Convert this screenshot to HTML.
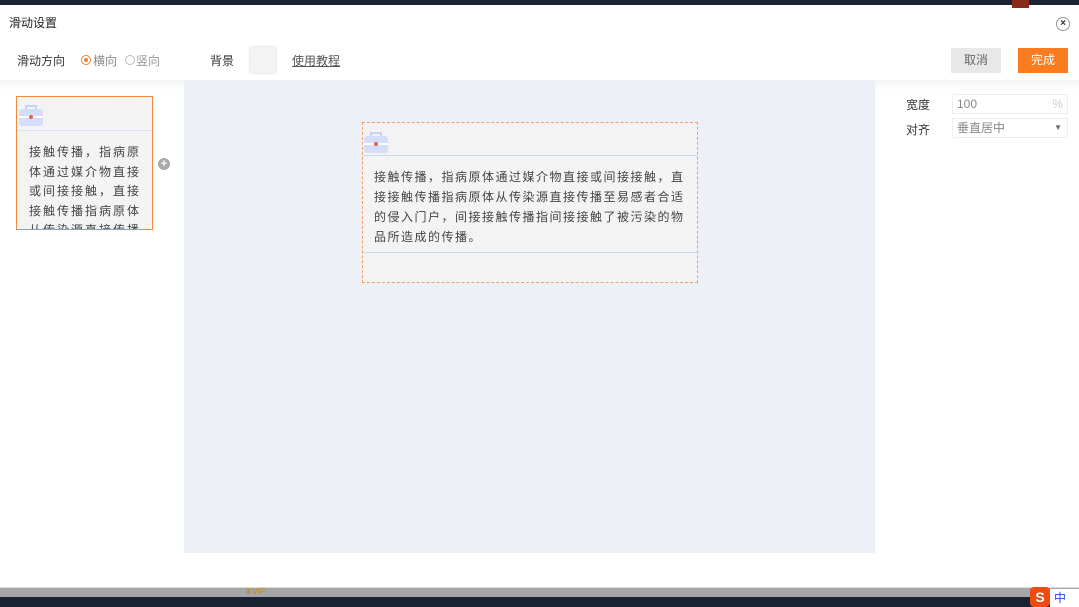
<!DOCTYPE html>
<html><head><meta charset="utf-8"><style>
*{margin:0;padding:0;box-sizing:border-box}
body{width:1079px;height:607px;overflow:hidden;background:#1a2233;font-family:"Liberation Sans","Noto Sans CJK SC",sans-serif;position:relative}
.a{position:absolute}
.dlg{left:0;top:5px;width:1079px;height:582px;background:#fff}
.hatch{background-color:#f6f6f6;background-image:repeating-linear-gradient(45deg,#eee 0 1px,transparent 1px 3px)}
.txt{color:#444;font-size:12px;letter-spacing:2px}
</style></head><body>
<div class="a dlg"></div>
<div class="a" style="left:1012px;top:0;width:17px;height:8px;background:#8a2a1a"></div>
<div class="a" style="left:9px;top:14px;font-size:12px;color:#222">滑动设置</div>
<div class="a" style="left:1056px;top:17px;width:14px;height:14px;border:1px solid #999;border-radius:50%;font-size:10px;line-height:12px;text-align:center;color:#333;font-weight:bold">×</div>
<div class="a" style="left:17px;top:52px;font-size:12px;color:#333">滑动方向</div>
<div class="a" style="left:81px;top:55px;width:10px;height:10px;border:1px solid #f08030;border-radius:50%"><div style="margin:2px;width:4px;height:4px;background:#f08030;border-radius:50%"></div></div>
<div class="a" style="left:93px;top:52px;font-size:12px;color:#888">横向</div>
<div class="a" style="left:125px;top:55px;width:10px;height:10px;border:1px solid #bbb;border-radius:50%"></div>
<div class="a" style="left:136px;top:52px;font-size:12px;color:#999">竖向</div>
<div class="a" style="left:210px;top:52px;font-size:12px;color:#333">背景</div>
<div class="a hatch" style="left:250px;top:47px;width:26px;height:26px;box-shadow:0 0 2px #ccc"></div>
<div class="a" style="left:292px;top:52px;font-size:12px;color:#555;text-decoration:underline">使用教程</div>
<div class="a" style="left:951px;top:48px;width:50px;height:25px;background:#e8e8e8;color:#666;font-size:12px;text-align:center;line-height:25px">取消</div>
<div class="a" style="left:1018px;top:48px;width:50px;height:25px;background:#fb7c20;color:#fff;font-size:12px;text-align:center;line-height:25px">完成</div>
<div class="a" style="left:0;top:80px;width:184px;height:10px;background:linear-gradient(#f3f3f3,#fff)"></div>
<div class="a" style="left:875px;top:80px;width:204px;height:10px;background:linear-gradient(#f3f3f3,#fff)"></div>
<div class="a" style="left:184px;top:80px;width:691px;height:473px;background:#edf0f6"></div>
<!-- left card -->
<div class="a hatch" style="left:16px;top:96px;width:137px;height:134px;border:1px solid #f08a40;overflow:hidden">
<div style="height:34px;border-bottom:1px solid #d8e2f8;position:relative"><svg class="a" style="left:1px;top:6px" width="26" height="24" viewBox="0 0 26 24"><path d="M8 6V3h10v3" fill="none" stroke="#c5d3f6" stroke-width="2"/><rect x="1" y="6" width="24" height="17" rx="3" fill="#d4def8"/><rect x="1" y="13" width="24" height="2" fill="#fff"/><circle cx="13" cy="14" r="2" fill="#f06040"/></svg></div>
<div class="txt" style="padding:12px 0 0 12px;line-height:19.5px;width:135px">接触传播，指病原体通过媒介物直接或间接接触，直接接触传播指病原体从传染源直接传播</div></div>
<div class="a" style="left:158px;top:158px;width:12px;height:12px;border-radius:50%;background:#aaa;color:#fff;font-size:11px;line-height:12px;text-align:center;font-weight:bold">+</div>
<!-- center card -->
<div class="a hatch" style="left:362px;top:122px;width:336px;height:161px;border:1px dashed #f0a060">
<div style="height:33px;border-bottom:1px solid #c9d8f8;position:relative"><svg class="a" style="left:0px;top:7px" width="26" height="24" viewBox="0 0 26 24"><path d="M8 6V3h10v3" fill="none" stroke="#c5d3f6" stroke-width="2"/><rect x="1" y="6" width="24" height="17" rx="3" fill="#d4def8"/><rect x="1" y="13" width="24" height="2" fill="#fff"/><circle cx="13" cy="14" r="2" fill="#f06040"/></svg></div>
<div class="txt" style="padding:11px 0 0 11px;line-height:20px;height:97px;border-bottom:1px solid #c9d8f8;letter-spacing:1.5px;white-space:nowrap">接触传播，指病原体通过媒介物直接或间接接触，直<br>接接触传播指病原体从传染源直接传播至易感者合适<br>的侵入门户，间接接触传播指间接接触了被污染的物<br>品所造成的传播。</div></div>
<!-- right -->
<div class="a" style="left:906px;top:96px;font-size:12px;color:#333">宽度</div>
<div class="a" style="left:952px;top:94px;width:116px;height:20px;border:1px solid #eee;font-size:12px;color:#888;line-height:18px;padding-left:4px">100<span style="float:right;color:#ccc;padding-right:4px">%</span></div>
<div class="a" style="left:906px;top:121px;font-size:12px;color:#333">对齐</div>
<div class="a" style="left:952px;top:118px;width:116px;height:20px;border:1px solid #eee;font-size:12px;color:#888;line-height:18px;padding-left:4px">垂直居中<span style="float:right;color:#666;padding-right:5px;font-size:8px">▼</span></div>
<!-- bottom -->
<div class="a" style="left:0;top:587px;width:1079px;height:10px;background:#a4a6a8"></div>
<div class="a" style="left:0;top:587px;width:1079px;height:1px;background:#ddd"></div>
<div class="a" style="left:245px;top:587px;font-size:8px;color:#c08a20;line-height:10px">♛VIP</div>
<div class="a" style="left:1030px;top:587px;width:20px;height:20px;background:#f04a10;border-radius:4px;color:#fff;font-size:14px;font-weight:bold;text-align:center;line-height:20px">S</div>
<div class="a" style="left:1050px;top:589px;width:29px;height:18px;background:#fff;color:#2050c0;font-size:12px;line-height:18px;padding-left:4px">中</div>
</body></html>
